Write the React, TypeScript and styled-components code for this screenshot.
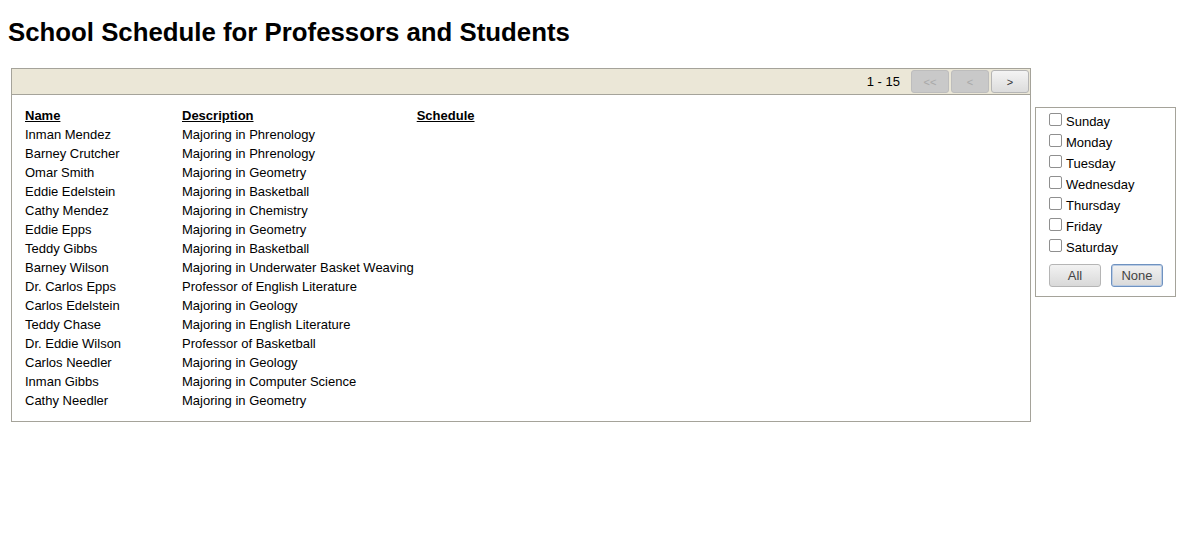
import React from "react";
import styled, { createGlobalStyle } from "styled-components";

const Global = createGlobalStyle`
  body {
    margin: 8px;
    font-family: "Liberation Sans", Arial, sans-serif;
    font-size: 13px;
    color: #000;
    background: #fff;
  }
`;

const Title = styled.h1`
  font-family: "Liberation Sans", Arial, sans-serif;
  font-size: 25.8px;
  font-weight: bold;
  margin: 9px 0 21px 0;
  line-height: 30px;
`;

const Layout = styled.div`
  display: flex;
  align-items: flex-start;
  padding-left: 3px;
  gap: 4px;
`;

const MainPanel = styled.div`
  width: 1018px;
  border: 1px solid #a5a39a;
`;

const Bar = styled.div`
  height: 25px;
  background: #ebe7d7;
  border-bottom: 1px solid #a5a39a;
  display: flex;
  align-items: center;
  justify-content: flex-end;
  padding-right: 1px;
`;

const Range = styled.span`
  font-size: 13px;
  margin-right: 9px;
`;

const PagerButton = styled.button<{ $disabled?: boolean }>`
  width: 38px;
  height: 23px;
  margin-left: 2px;
  padding: 0;
  font-family: "Liberation Sans", Arial, sans-serif;
  font-size: 11px;
  border-radius: 3px;
  border: 1px solid ${(p) => (p.$disabled ? "#bdbdbd" : "#b5b5b5")};
  color: ${(p) => (p.$disabled ? "#a8a8a8" : "#333")};
  background: ${(p) =>
    p.$disabled
      ? "#c9c9c9"
      : "linear-gradient(#f4f4f4, #dcdcdc)"};
`;

const Table = styled.table`
  border-collapse: collapse;
  margin: 11px 0 11px 11px;
`;

const HeadCell = styled.th<{ $w?: number }>`
  text-align: left;
  font-weight: bold;
  text-decoration: underline;
  padding: 0 1px 0 2px;
  height: 19px;
  width: ${(p) => (p.$w ? `${p.$w}px` : "auto")};
`;

const Cell = styled.td`
  padding: 0 1px 0 2px;
  height: 19px;
  white-space: nowrap;
`;

const SidePanel = styled.div`
  margin-top: 39px;
  border: 1px solid #a5a39a;
  padding: 3px 0 9px 13px;
  box-sizing: border-box;
  width: 141px;
`;

const DayRow = styled.label`
  display: flex;
  align-items: center;
  height: 21px;
  font-size: 13px;
`;

const Box = styled.span`
  display: inline-block;
  width: 11px;
  height: 11px;
  border: 1px solid #8f8f8f;
  border-radius: 2px;
  background: #fff;
  margin: -4px 4px 0 0;
`;

const Buttons = styled.div`
  display: flex;
  gap: 10px;
  margin-top: 6px;
`;

const SideButton = styled.button<{ $focus?: boolean }>`
  width: 52px;
  height: 23px;
  padding: 0;
  font-family: "Liberation Sans", Arial, sans-serif;
  font-size: 13px;
  color: #444;
  border-radius: 3px;
  border: 1px solid ${(p) => (p.$focus ? "#6f92c0" : "#b5b5b5")};
  box-shadow: ${(p) => (p.$focus ? "inset 0 0 0 1px #b9cbe3" : "none")};
  background: linear-gradient(#f2f2f2, #d9d9d9);
`;

const rows: [string, string][] = [
  ["Inman Mendez", "Majoring in Phrenology"],
  ["Barney Crutcher", "Majoring in Phrenology"],
  ["Omar Smith", "Majoring in Geometry"],
  ["Eddie Edelstein", "Majoring in Basketball"],
  ["Cathy Mendez", "Majoring in Chemistry"],
  ["Eddie Epps", "Majoring in Geometry"],
  ["Teddy Gibbs", "Majoring in Basketball"],
  ["Barney Wilson", "Majoring in Underwater Basket Weaving"],
  ["Dr. Carlos Epps", "Professor of English Literature"],
  ["Carlos Edelstein", "Majoring in Geology"],
  ["Teddy Chase", "Majoring in English Literature"],
  ["Dr. Eddie Wilson", "Professor of Basketball"],
  ["Carlos Needler", "Majoring in Geology"],
  ["Inman Gibbs", "Majoring in Computer Science"],
  ["Cathy Needler", "Majoring in Geometry"],
];

const days = ["Sunday", "Monday", "Tuesday", "Wednesday", "Thursday", "Friday", "Saturday"];

export default function App() {
  return (
    <>
      <Global />
      <Title>School Schedule for Professors and Students</Title>
      <Layout>
        <MainPanel>
          <Bar>
            <Range>1 - 15</Range>
            <PagerButton $disabled>&lt;&lt;</PagerButton>
            <PagerButton $disabled>&lt;</PagerButton>
            <PagerButton>&gt;</PagerButton>
          </Bar>
          <Table>
            <thead>
              <tr>
                <HeadCell $w={154}>Name</HeadCell>
                <HeadCell $w={228}>Description</HeadCell>
                <HeadCell>Schedule</HeadCell>
              </tr>
            </thead>
            <tbody>
              {rows.map(([n, d]) => (
                <tr key={n}>
                  <Cell>{n}</Cell>
                  <Cell>{d}</Cell>
                  <Cell />
                </tr>
              ))}
            </tbody>
          </Table>
        </MainPanel>
        <SidePanel>
          {days.map((d) => (
            <DayRow key={d}>
              <Box />
              {d}
            </DayRow>
          ))}
          <Buttons>
            <SideButton>All</SideButton>
            <SideButton $focus>None</SideButton>
          </Buttons>
        </SidePanel>
      </Layout>
    </>
  );
}
